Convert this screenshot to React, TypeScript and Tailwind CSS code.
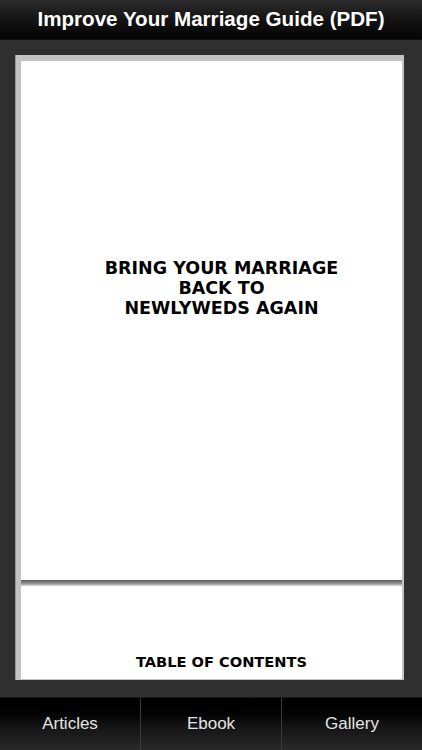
import React from 'react'

const tabs = ['Articles', 'Ebook', 'Gallery']

const App: React.FC = () => {
  return (
    <div className="w-[422px] h-[750px] flex flex-col overflow-hidden bg-[#2e2e2e] font-['Liberation_Sans',Arial,sans-serif]">
      <header className="h-[40px] flex-shrink-0 flex items-center justify-center bg-gradient-to-b from-[#2c2c2c] via-[#141414] to-[#050505] border-b border-[#111]">
        <h1 className="text-white text-[20.6px] font-bold tracking-[0px]">Improve Your Marriage Guide (PDF)</h1>
      </header>

      <main className="h-[657px] flex-shrink-0 pt-[15px] pl-[15px] pr-[18px] pb-[17px] bg-[#2f2f2f]">
        <div className="h-full flex flex-col bg-[#c3c3c3] pl-[5px] pt-[6px] pr-[2px] pb-[1px] overflow-hidden border-l border-[#9a9a9a]">
          <div className="h-[519px] flex-shrink-0 bg-white flex flex-col items-center justify-center pl-[20px] pb-[66px] font-['DejaVu_Sans',Verdana,sans-serif] font-bold text-black text-[17.5px] leading-[20px] text-center">
            <p>BRING YOUR MARRIAGE</p>
            <p>BACK TO</p>
            <p>NEWLYWEDS AGAIN</p>
          </div>
          <div className="h-[6px] flex-shrink-0 bg-gradient-to-b from-[#5a5a5a] via-[#8a8a8a] to-[#d8d8d8]" />
          <div className="flex-1 bg-white flex flex-col items-center justify-end pl-[20px] pb-[9px]">
            <p className="font-['DejaVu_Sans',Verdana,sans-serif] font-bold text-black text-[14.6px] leading-[16px]">TABLE OF CONTENTS</p>
          </div>
        </div>
      </main>

      <nav className="flex-1 flex bg-gradient-to-b from-[#000] via-[#121212] to-[#2a2a2a] border-t border-[#1a1a1a]">
        {tabs.map((t, i) => (
          <div
            key={t}
            className={`flex-1 flex items-center justify-center text-[#e4e4e4] text-[17px] ${i > 0 ? 'border-l border-[#3a3a3a]' : ''}`}
          >
            {t}
          </div>
        ))}
      </nav>
    </div>
  )
}

export default App
